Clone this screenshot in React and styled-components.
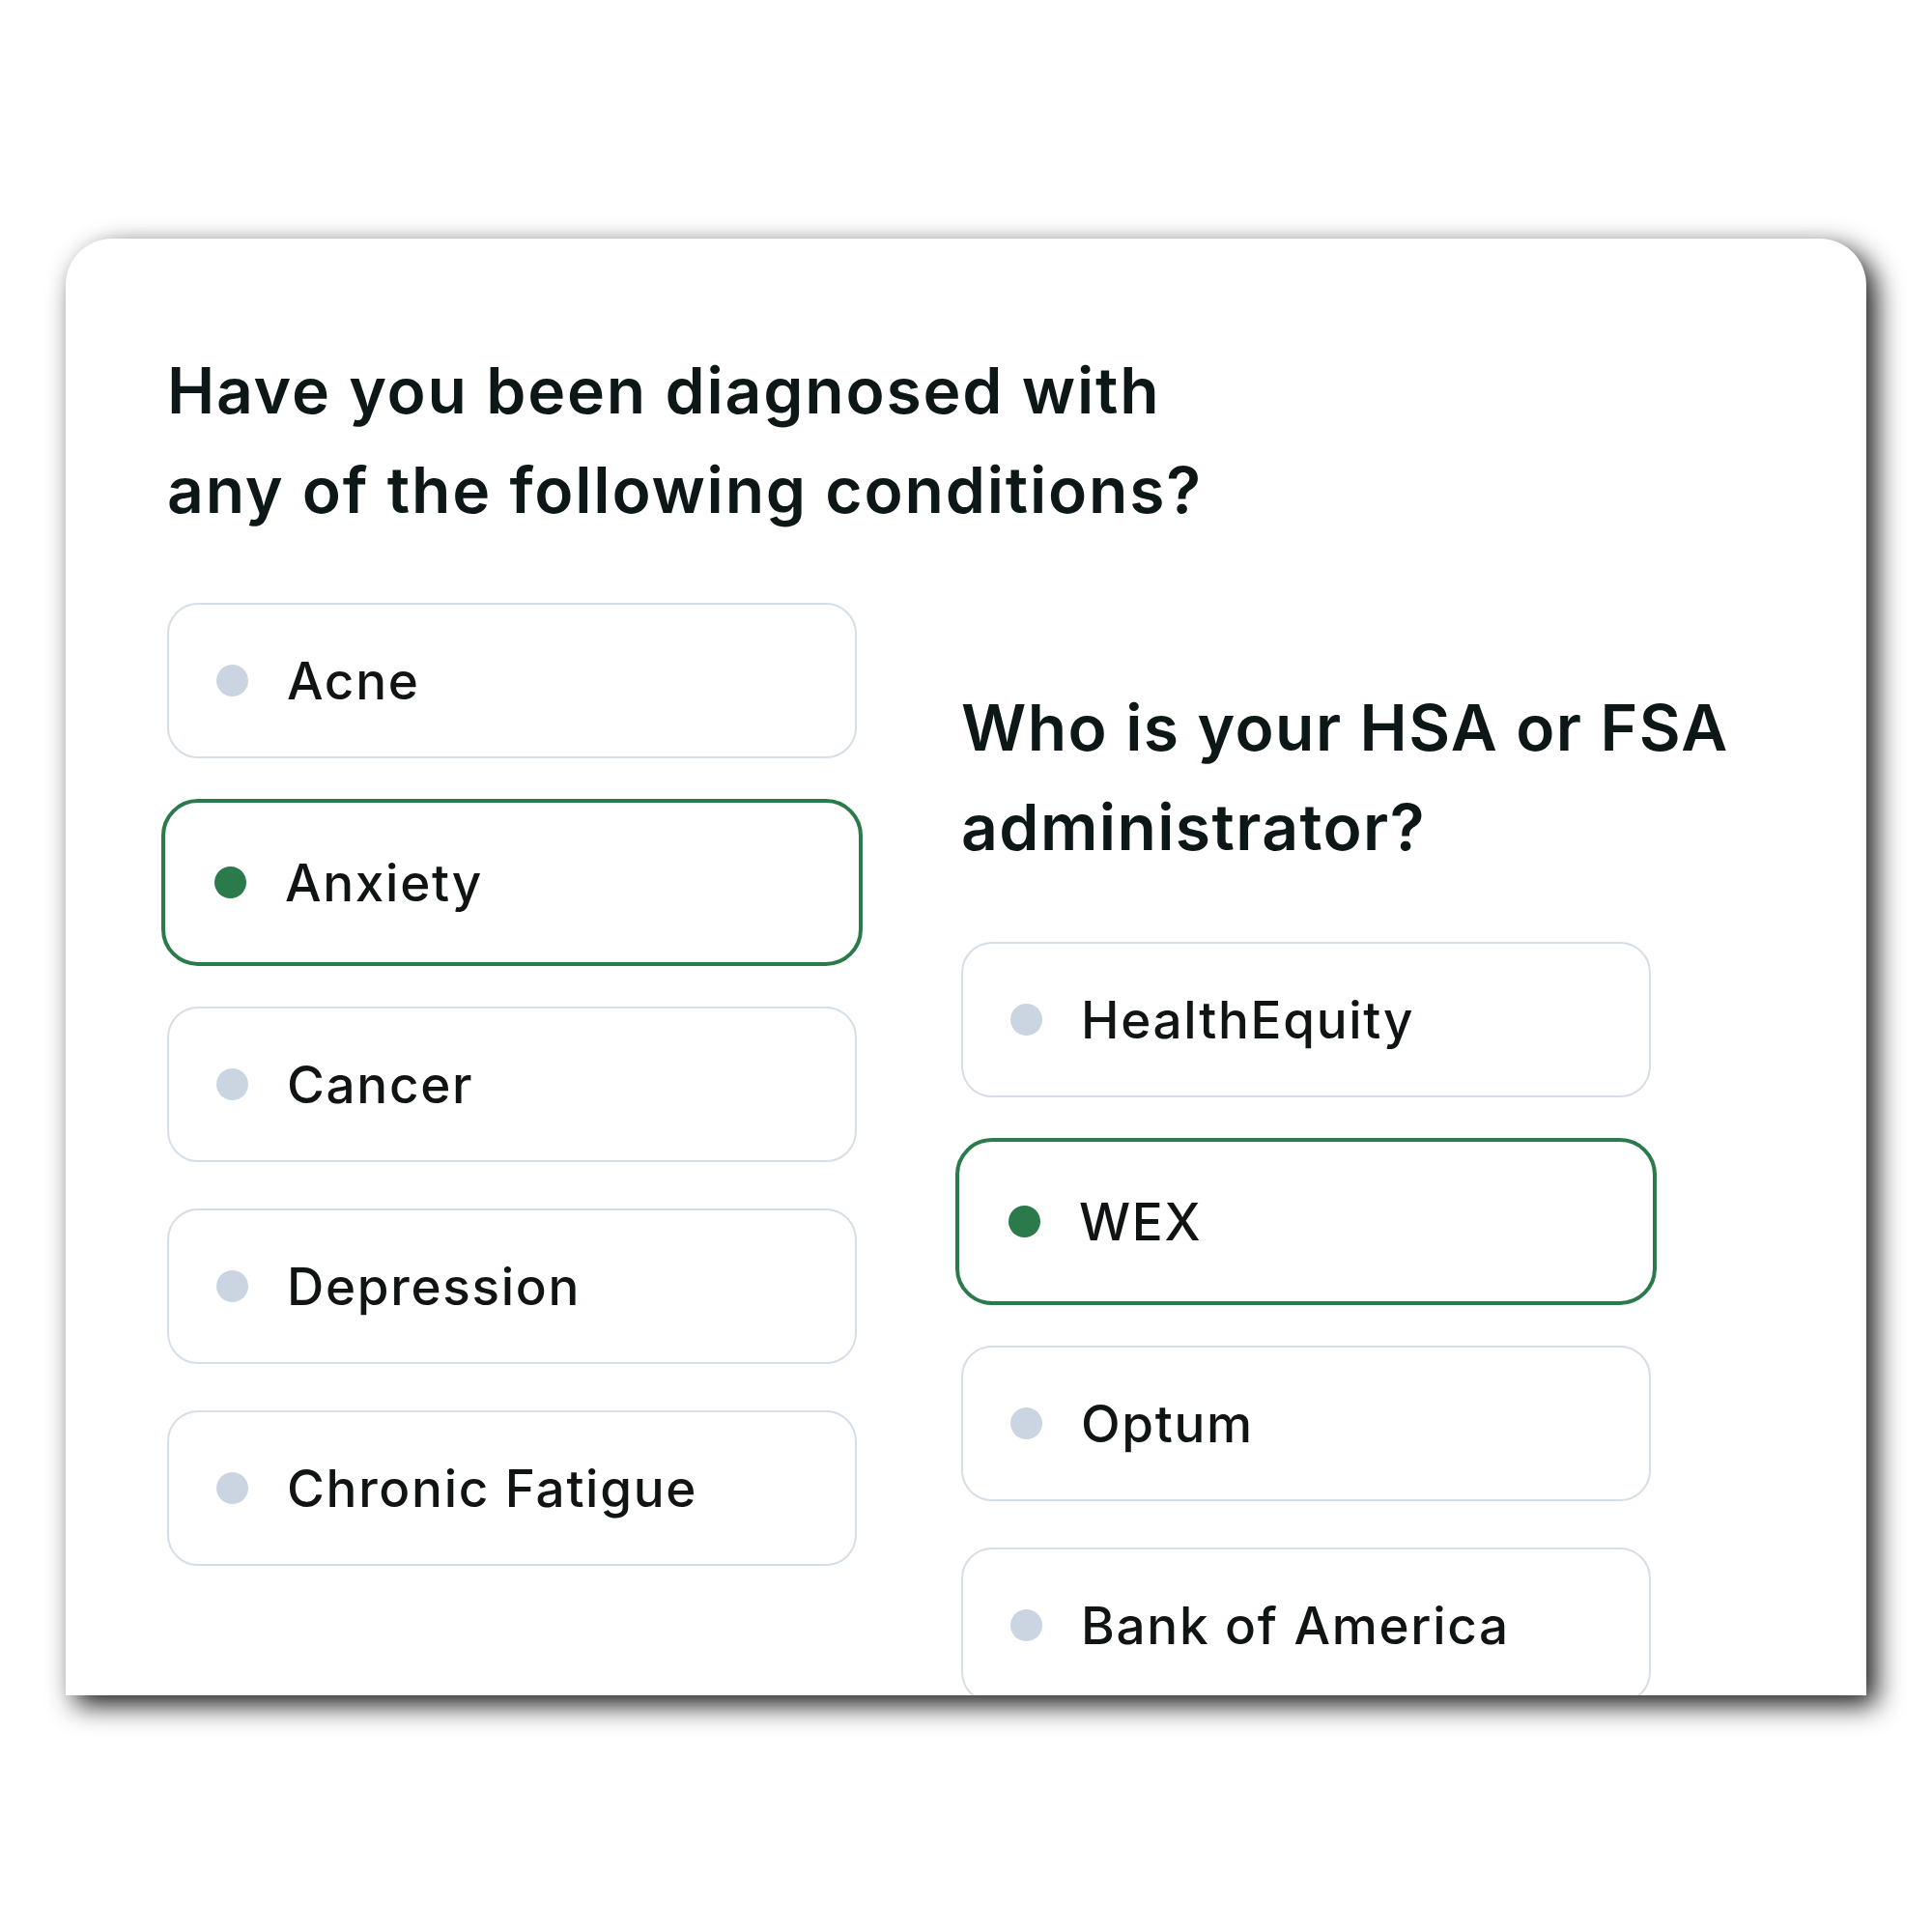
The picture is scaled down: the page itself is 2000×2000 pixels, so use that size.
import React from "react";
import styled, { createGlobalStyle } from "styled-components";

// Health questionnaire card

const GlobalStyle = createGlobalStyle`
  html, body {
    margin: 0;
    padding: 0;
    background: #ffffff;
  }
  body {
    font-family: Inter, "Open Sans", sans-serif;
    color: #0e1717;
  }
`;

const Page = styled.div`
  width: 2000px;
  height: 2000px;
  padding: 247px 0 0 68px;
  box-sizing: border-box;
  background: #ffffff;
`;

const Card = styled.section`
  width: 1864px;
  height: 1508px;
  box-sizing: border-box;
  padding: 106px 0 0 105px;
  background: #ffffff;
  border-radius: 48px 48px 0 0;
  box-shadow: 10px 10px 28px rgba(0, 0, 0, 0.9);
  overflow: hidden;
`;

const Question = styled.h2`
  margin: 0;
  font-family: Inter, sans-serif;
  font-weight: 600;
  font-size: 66px;
  line-height: 103px;
  letter-spacing: ${(p) => p.$spacing || 1.8}px;
  color: #0e1717;
  white-space: nowrap;
`;

const Columns = styled.div`
  display: flex;
  align-items: flex-start;
  margin-top: 65px;
`;

const Column = styled.div`
  display: flex;
  flex-direction: column;
  width: 714px;
  margin-left: ${(p) => p.$offset || 0}px;
  padding-top: ${(p) => p.$top || 0}px;
`;

const OptionList = styled.div`
  display: flex;
  flex-direction: column;
  gap: 48px;
  margin-top: ${(p) => p.$top || 0}px;
`;

const Option = styled.div`
  display: flex;
  align-items: center;
  box-sizing: border-box;
  height: ${(p) => (p.$selected ? 173 : 161)}px;
  margin: ${(p) => (p.$selected ? "-6px -6px" : "0")};
  padding-left: ${(p) => (p.$selected ? 51 : 49)}px;
  border: ${(p) => (p.$selected ? "4px solid #2b7a4b" : "2px solid #d6dee8")};
  border-radius: ${(p) => (p.$selected ? 38 : 32)}px;
  background: #ffffff;
`;

const Dot = styled.span`
  width: 33px;
  height: 33px;
  border-radius: 50%;
  flex-shrink: 0;
  background: ${(p) => (p.$selected ? "#2b7a4b" : "#cbd5e1")};
`;

const Label = styled.span`
  margin-left: 40px;
  font-family: Inter, sans-serif;
  font-weight: 500;
  font-size: 53px;
  letter-spacing: 1.7px;
  color: #111414;
  white-space: nowrap;
`;

const conditions = [
  { name: "Acne" },
  { name: "Anxiety", selected: true },
  { name: "Cancer" },
  { name: "Depression" },
  { name: "Chronic Fatigue" },
];

const administrators = [
  { name: "HealthEquity" },
  { name: "WEX", selected: true },
  { name: "Optum" },
  { name: "Bank of America" },
];

function Choice({ name, selected }) {
  return (
    <Option $selected={selected}>
      <Dot $selected={selected} />
      <Label>{name}</Label>
    </Option>
  );
}

export default function App() {
  return (
    <>
      <GlobalStyle />
      <Page>
        <Card>
          <Question>
            Have you been diagnosed with
            <br />
            any of the following conditions?
          </Question>
          <Columns>
            <Column>
              <OptionList>
                {conditions.map((c) => (
                  <Choice key={c.name} {...c} />
                ))}
              </OptionList>
            </Column>
            <Column $offset={108} $top={78}>
              <Question $spacing={1.4}>
                Who is your HSA or FSA
                <br />
                administrator?
              </Question>
              <OptionList $top={67}>
                {administrators.map((a) => (
                  <Choice key={a.name} {...a} />
                ))}
              </OptionList>
            </Column>
          </Columns>
        </Card>
      </Page>
    </>
  );
}
